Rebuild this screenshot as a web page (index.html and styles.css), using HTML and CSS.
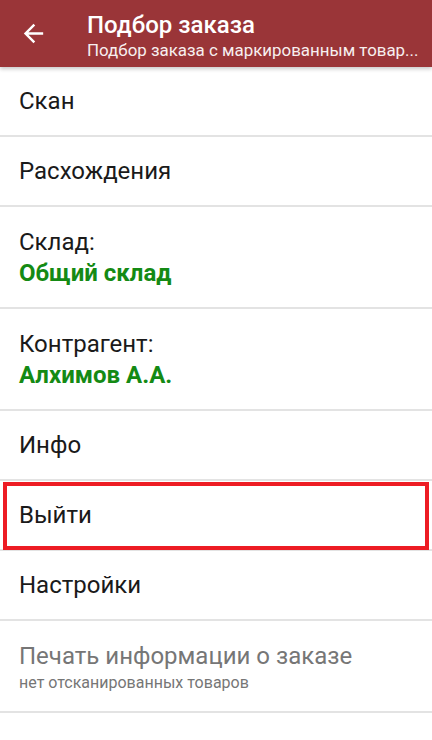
FILE: index.html
```html
<!DOCTYPE html>
<html lang="ru">
<head>
<meta charset="utf-8">
<title>Подбор заказа</title>
<link rel="stylesheet" href="styles.css">
</head>
<body>
<header class="appbar">
  <button class="back" aria-label="Назад">
    <svg viewBox="0 0 24 24" width="29" height="29"><path d="M20 11H7.83l5.59-5.59L12 4l-8 8 8 8 1.41-1.41L7.83 13H20v-2z" fill="#fff"/></svg>
  </button>
  <div class="titles">
    <div class="title">Подбор заказа</div>
    <div class="subtitle">Подбор заказа с маркированным товар...</div>
  </div>
</header>
<ul class="menu">
  <li class="item"><span class="label">Скан</span></li>
  <li class="item"><span class="label">Расхождения</span></li>
  <li class="item tall">
    <span class="label">Склад:</span>
    <span class="value">Общий склад</span>
  </li>
  <li class="item tall">
    <span class="label">Контрагент:</span>
    <span class="value">Алхимов А.А.</span>
  </li>
  <li class="item"><span class="label">Инфо</span></li>
  <li class="item selected"><span class="label">Выйти</span></li>
  <li class="item"><span class="label">Настройки</span></li>
  <li class="item disabled">
    <span class="label">Печать информации о заказе</span>
    <span class="hint">нет отсканированных товаров</span>
  </li>
</ul>
</body>
</html>
```
FILE: styles.css
```css
* { box-sizing: border-box; }

html, body {
  margin: 0;
  padding: 0;
  background: #fff;
  font-family: Roboto, "Noto Sans", sans-serif;
}

.appbar {
  position: relative;
  z-index: 1;
  height: 67px;
  background: #9a3538;
  color: #fff;
  display: flex;
  align-items: center;
  box-shadow: 0 2px 4px rgba(0, 0, 0, 0.22);
}

.back {
  width: 87px;
  height: 67px;
  padding: 0 0 0 19px;
  border: 0;
  background: none;
  display: flex;
  align-items: center;
  flex: none;
}

.titles {
  align-self: stretch;
  min-width: 0;
  flex: 1;
  padding: 11px 8px 0 0;
}

.title {
  font-size: 24px;
  font-weight: 500;
  line-height: 28px;
}

.subtitle {
  font-size: 16.9px;
  line-height: 22px;
  white-space: nowrap;
  opacity: 0.92;
}

.menu {
  list-style: none;
  margin: 0;
  padding: 0;
}

.item {
  position: relative;
  height: 70px;
  padding: 0 19px;
  border-bottom: 2px solid #e3e3e3;
  display: flex;
  flex-direction: column;
  justify-content: center;
  font-size: 24px;
  color: #1a1a1a;
}

.item.tall {
  height: 102px;
  line-height: 31px;
  padding-top: 2px;
}

.value {
  color: #148a14;
  font-weight: 700;
}

.item.selected::after {
  content: "";
  position: absolute;
  top: 1px;
  bottom: -1px;
  left: 3px;
  right: 3px;
  border: 4px solid #ed1c24;
}

.item.disabled {
  height: 92px;
  padding-top: 2px;
  color: #767676;
}

.item.disabled .label {
  line-height: 28px;
}

.hint {
  font-size: 16px;
  line-height: 20px;
  margin-top: 3px;
}
```
